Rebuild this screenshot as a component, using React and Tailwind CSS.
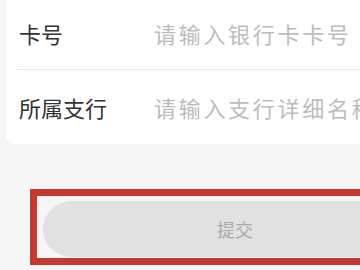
import React from "react";

const font = { fontFamily: '"Noto Sans CJK SC", "Noto Sans", sans-serif' };

function Row({ label, placeholder, last }) {
  return (
    <div
      className={
        "flex flex-row items-center h-[74px] " +
        (last ? "" : "border-b border-[#e8e8e8]")
      }
    >
      <p className="w-[141px] pl-[2px] text-[22px] text-[#333333] leading-none">
        {label}
      </p>
      <input
        placeholder={placeholder}
        className="flex-1 bg-transparent outline-none text-[22px] tracking-[2.7px] leading-none placeholder:text-[#bcbcbc]"
        style={font}
      />
    </div>
  );
}

export default function App() {
  return (
    <div className="w-[360px] h-[270px] overflow-hidden bg-[#f6f6f6]" style={font}>
      <div className="w-[470px] -mt-[4px] flex flex-col">
        <div className="ml-[6px] w-[458px] bg-white rounded-b-lg px-[11px]">
          <Row label="卡号" placeholder="请输入银行卡卡号" />
          <Row label="所属支行" placeholder="请输入支行详细名称" last />
        </div>
        <div className="ml-[30px] mt-[45px] w-[410px] border-[7px] border-[#c43a30] pt-[5px] pb-[1px] px-[6px]">
          <button className="w-full h-[56px] rounded-full bg-[#e1e1e1] text-[18px] text-[#a9a9a9]">
            提交
          </button>
        </div>
      </div>
    </div>
  );
}
